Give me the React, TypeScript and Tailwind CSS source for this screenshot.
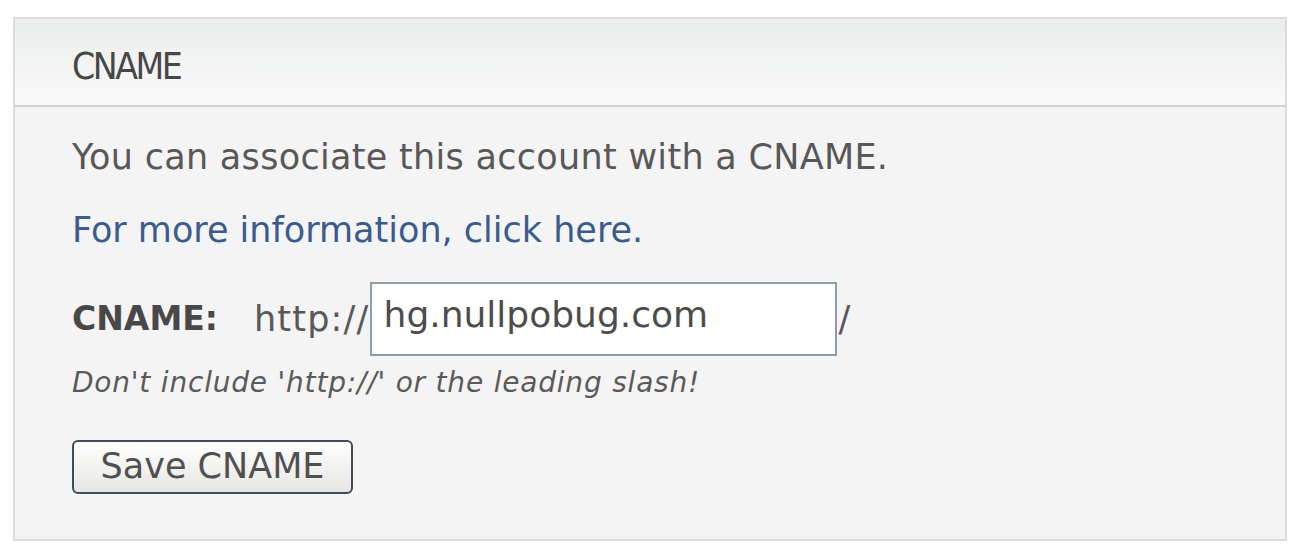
export default function App() {
  return (
    <div className="min-h-[551px] w-[1300px] bg-white pt-[17px] pl-[13px]">
      {/* ── CNAME panel ── */}
      <div className="w-[1274px] h-[524px] border-2 border-[#dcdcdc] bg-[#f4f4f4] flex flex-col">
        <div className="h-[88px] shrink-0 flex items-center pl-[57px] pt-[8px] border-b-2 border-[#d2d2d2] bg-gradient-to-b from-[#eaecec] to-[#fafafa]">
          <span className="text-[37px] leading-none text-[#474747] tracking-[-2.5px] [font-family:'DejaVu_Sans_Condensed','Liberation_Sans',sans-serif]">
            CNAME
          </span>
        </div>

        <div className="flex-1 pl-[57px] pt-[30px] text-[#585858] [font-family:'DejaVu_Sans',Verdana,sans-serif]">
          <p className="text-[35px] leading-[40px] tracking-[0.3px]">You can associate this account with a CNAME.</p>
          <p className="mt-[33px] text-[35px] leading-[40px]">
            <a className="text-[#3b5b8e] cursor-pointer">For more information, click here.</a>
          </p>

          <div className="mt-[32px] flex items-center text-[35px]">
            <span className="font-bold text-[33px] text-[#484848]">CNAME:</span>
            <span className="ml-[36px] tracking-[1.2px]">http://</span>
            <div className="w-[467px] h-[74px] border-2 border-[#8f9caa] bg-white flex items-center pl-[12px] pb-[8px] text-[36px] text-[#4c4c4c]">
              hg.nullpobug.com
            </div>
            <span className="ml-[2px]">/</span>
          </div>

          <p className="mt-[12px] text-[28px] leading-[30px] italic tracking-[0.8px] text-[#5a5a5a]">
            Don't include 'http://' or the leading slash!
          </p>

          <button className="mt-[42px] w-[281px] h-[54px] rounded-[6px] border-2 border-[#3f4c5a] bg-gradient-to-b from-white to-[#e6e6e2] text-[35px] leading-none text-[#505050] flex items-center justify-center pb-[2px]">
            Save CNAME
          </button>
        </div>
      </div>
    </div>
  );
}
